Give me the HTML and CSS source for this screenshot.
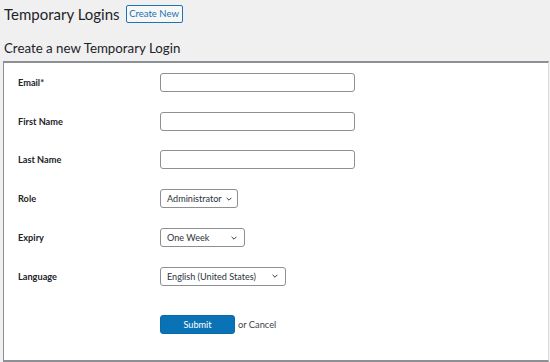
FILE: index.html
```html
<!DOCTYPE html>
<html>
<head>
<meta charset="utf-8">
<link rel="stylesheet" href="styles.css">
</head>
<body>
<div class="page">
  <div class="header">
    <h1 class="title">Temporary Logins</h1>
    <button class="btn-outline">Create New</button>
  </div>
  <h2 class="subtitle">Create a new Temporary Login</h2>
  <div class="panel">
    <div class="row">
      <label class="label">Email*</label>
      <input class="text" type="text">
    </div>
    <div class="row">
      <label class="label">First Name</label>
      <input class="text" type="text">
    </div>
    <div class="row">
      <label class="label">Last Name</label>
      <input class="text" type="text">
    </div>
    <div class="row">
      <label class="label">Role</label>
      <div class="select role"><span>Administrator</span><svg viewBox="0 0 10 10" width="8" height="8"><path d="M2 3.5 L5 6.5 L8 3.5" fill="none" stroke="#2c3338" stroke-width="1.2"/></svg></div>
    </div>
    <div class="row">
      <label class="label">Expiry</label>
      <div class="select expiry"><span>One Week</span><svg viewBox="0 0 10 10" width="8" height="8"><path d="M2 3.5 L5 6.5 L8 3.5" fill="none" stroke="#2c3338" stroke-width="1.2"/></svg></div>
    </div>
    <div class="row">
      <label class="label">Language</label>
      <div class="select language"><span>English (United States)</span><svg viewBox="0 0 10 10" width="8" height="8"><path d="M2 3.5 L5 6.5 L8 3.5" fill="none" stroke="#2c3338" stroke-width="1.2"/></svg></div>
    </div>
    <div class="actions">
      <button class="btn-primary">Submit</button>
      <span class="cancel">or Cancel</span>
    </div>
  </div>
</div>
</body>
</html>
```
FILE: styles.css
```css
html, body {
  margin: 0;
  padding: 0;
  background: #f0f0f1;
  font-family: Lato, "Noto Sans", sans-serif;
  color: #1d2327;
}
.page {
  width: 550px;
  height: 362px;
  overflow: hidden;
}
.header {
  display: flex;
  align-items: center;
  gap: 6px;
  padding: 4px 0 0 4px;
  height: 20px;
}
.title {
  margin: 0;
  font-size: 15px;
  font-weight: 400;
  line-height: 20px;
  color: #1d2327;
}
.btn-outline {
  font-family: inherit;
  font-size: 9.5px;
  color: #2271b1;
  background: #f6f7f7;
  border: 1px solid #2271b1;
  border-radius: 2px;
  height: 18px;
  width: 57px;
  padding: 0;
  line-height: 16px;
}
.subtitle {
  margin: 14px 0 0 4px;
  font-size: 13.3px;
  font-weight: 400;
  line-height: 20px;
}
.panel {
  margin: 3px 1px 0 3px;
  background: #fff;
  border: 1px solid #8c8f94;
  border-right-color: #dcdcde;
  border-top-width: 2px;
  border-bottom-width: 2px;
  height: 301px;
  box-sizing: border-box;
  padding-top: 0;
}
.row {
  display: flex;
  align-items: center;
  height: 38.8px;
}
.label {
  width: 156px;
  flex: none;
  padding-left: 14px;
  box-sizing: border-box;
  font-size: 9.2px;
  font-weight: 700;
  color: #1d2327;
}
.text {
  width: 195px;
  height: 19px;
  box-sizing: border-box;
  border: 1px solid #8c8f94;
  border-radius: 3px;
  margin: 0;
  padding: 0;
}
.select {
  display: flex;
  align-items: center;
  justify-content: space-between;
  height: 19px;
  box-sizing: border-box;
  border: 1px solid #8c8f94;
  border-radius: 3px;
  padding: 0 5px 0 6px;
  font-size: 9.1px;
  color: #2c3338;
}
.select.role { width: 78px; padding-right: 4px; }
.select.expiry { width: 85px; padding-right: 6px; }
.select.language { width: 126px; padding-right: 6px; }
.actions {
  display: flex;
  align-items: center;
  gap: 3px;
  padding-left: 156px;
  margin-top: 19px;
}
.btn-primary {
  font-family: inherit;
  width: 75px;
  height: 19px;
  background: #0a73b5;
  color: #fff;
  border: 1px solid #0a6aa8;
  border-radius: 3px;
  font-size: 9.2px;
  padding: 0;
}
.cancel {
  font-size: 9.3px;
  color: #3c434a;
}
```
